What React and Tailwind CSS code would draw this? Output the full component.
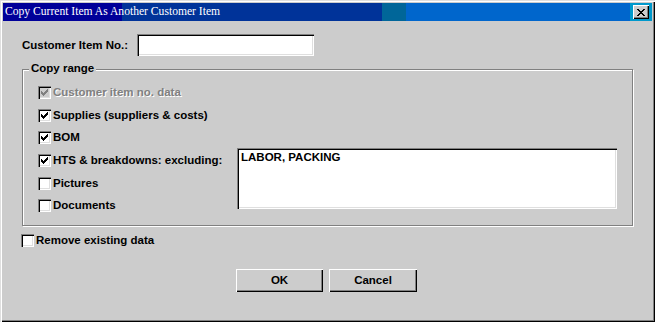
import React from 'react';

const raised = 'shadow-[inset_1px_1px_0_#fff,inset_-1px_-1px_0_#000,inset_-2px_-2px_0_#808080]';
const sunken = 'shadow-[inset_1px_1px_0_#808080,inset_2px_2px_0_#000,inset_-1px_-1px_0_#fff,inset_-2px_-2px_0_#dfdfdf]';

const CheckMark = ({ color }) => (
    <svg width="7" height="7" viewBox="0 0 7 7" shapeRendering="crispEdges" fill={color}>
        <rect x="6" y="0" width="1" height="1" />
        <rect x="5" y="1" width="2" height="1" />
        <rect x="0" y="2" width="1" height="1" />
        <rect x="4" y="2" width="3" height="1" />
        <rect x="0" y="3" width="2" height="1" />
        <rect x="3" y="3" width="3" height="1" />
        <rect x="0" y="4" width="5" height="1" />
        <rect x="1" y="5" width="3" height="1" />
        <rect x="2" y="6" width="1" height="1" />
    </svg>
);

const Check = ({ label, checked, disabled, className = 'h-[23px]' }) => (
    <div className={`flex items-center gap-[2px] ${className}`}>
        <div className={`w-[13px] h-[13px] shrink-0 flex items-center justify-center ${sunken} ${disabled ? 'bg-[#cccccc]' : 'bg-white'}`}>
            {checked && <CheckMark color={disabled ? '#808080' : '#000'} />}
        </div>
        <span className={disabled ? 'text-[#808080] [text-shadow:1px_1px_0_#fff]' : 'text-black'}>{label}</span>
    </div>
);

const Button = ({ children, w }) => (
    <button className={`${w} h-[23px] bg-[#cccccc] ${raised} flex items-center justify-center text-black font-bold`}>
        {children}
    </button>
);

const App = () => {
    return (
        <div
            className="w-[655px] h-[322px] bg-[#cccccc] p-[3px] overflow-hidden shadow-[inset_1px_1px_0_#dfdfdf,inset_2px_2px_0_#fff,inset_-1px_-1px_0_#000,inset_-2px_-2px_0_#808080] text-[11.5px] leading-[13px] font-bold"
            style={{ fontFamily: '"Liberation Sans", Arial, sans-serif' }}
        >
            {/* Title bar */}
            <div className="h-[18px] flex items-center bg-[linear-gradient(to_right,#000099_0_119px,#003399_119px_379px,#006699_379px_403px,#0066cc_403px_627px,#0099cc_627px)]">
                <span
                    className="ml-[2px] text-white font-normal text-[11.6px] leading-[18px] flex-1"
                    style={{ fontFamily: '"Liberation Serif", "Times New Roman", serif' }}
                >
                    Copy Current Item As Another Customer Item
                </span>
                <div className={`w-[16px] h-[14px] mr-[3px] bg-[#cccccc] ${raised} flex items-center justify-center`}>
                    <svg width="8" height="7" viewBox="0 0 8 7" shapeRendering="crispEdges" fill="#000">
                        <path d="M0 0h2v1h1v1h2V1h1V0h2v1H7v1H6v1H5v1h1v1h1v1h1v1H6V6H5V5H3v1H2v1H0V6h1V5h1V4h1V3H2V2H1V1H0z" />
                    </svg>
                </div>
            </div>

            {/* Customer item no. */}
            <div className="flex items-center mt-[13px] ml-[19px] h-[22px]">
                <span className="w-[115px] text-black">Customer Item No.:</span>
                <div className={`w-[177px] h-[22px] bg-white ${sunken}`} />
            </div>

            {/* Copy range group */}
            <div className="relative mt-[13px] ml-[19px] w-[611px] h-[157px] border border-[#808080] shadow-[inset_1px_1px_0_#fff,1px_1px_0_#fff] flex">
                <span className="absolute -top-[8px] left-[6px] px-[2px] bg-[#cccccc] text-black">Copy range</span>
                <div className="w-[214px] pl-[15px] pt-[11px]">
                    <Check label="Customer item no. data" checked disabled />
                    <Check label="Supplies (suppliers & costs)" checked />
                    <Check label="BOM" checked className="h-[21px]" />
                    <Check label="HTS & breakdowns: excluding:" checked className="h-[24px]" />
                    <Check label="Pictures" className="h-[22px]" />
                    <Check label="Documents" />
                </div>
                <div className={`mt-[78px] w-[380px] h-[61px] bg-white ${sunken} pl-[4px] pt-[3px] text-black`}>
                    LABOR, PACKING
                </div>
            </div>

            {/* Remove existing */}
            <div className="mt-[3px] ml-[18px]">
                <Check label="Remove existing data" />
            </div>

            {/* Buttons */}
            <div className="flex gap-[6px] mt-[17px] ml-[233px]">
                <Button w="w-[87px]">OK</Button>
                <Button w="w-[88px]">Cancel</Button>
            </div>
        </div>
    );
};

export default App;
